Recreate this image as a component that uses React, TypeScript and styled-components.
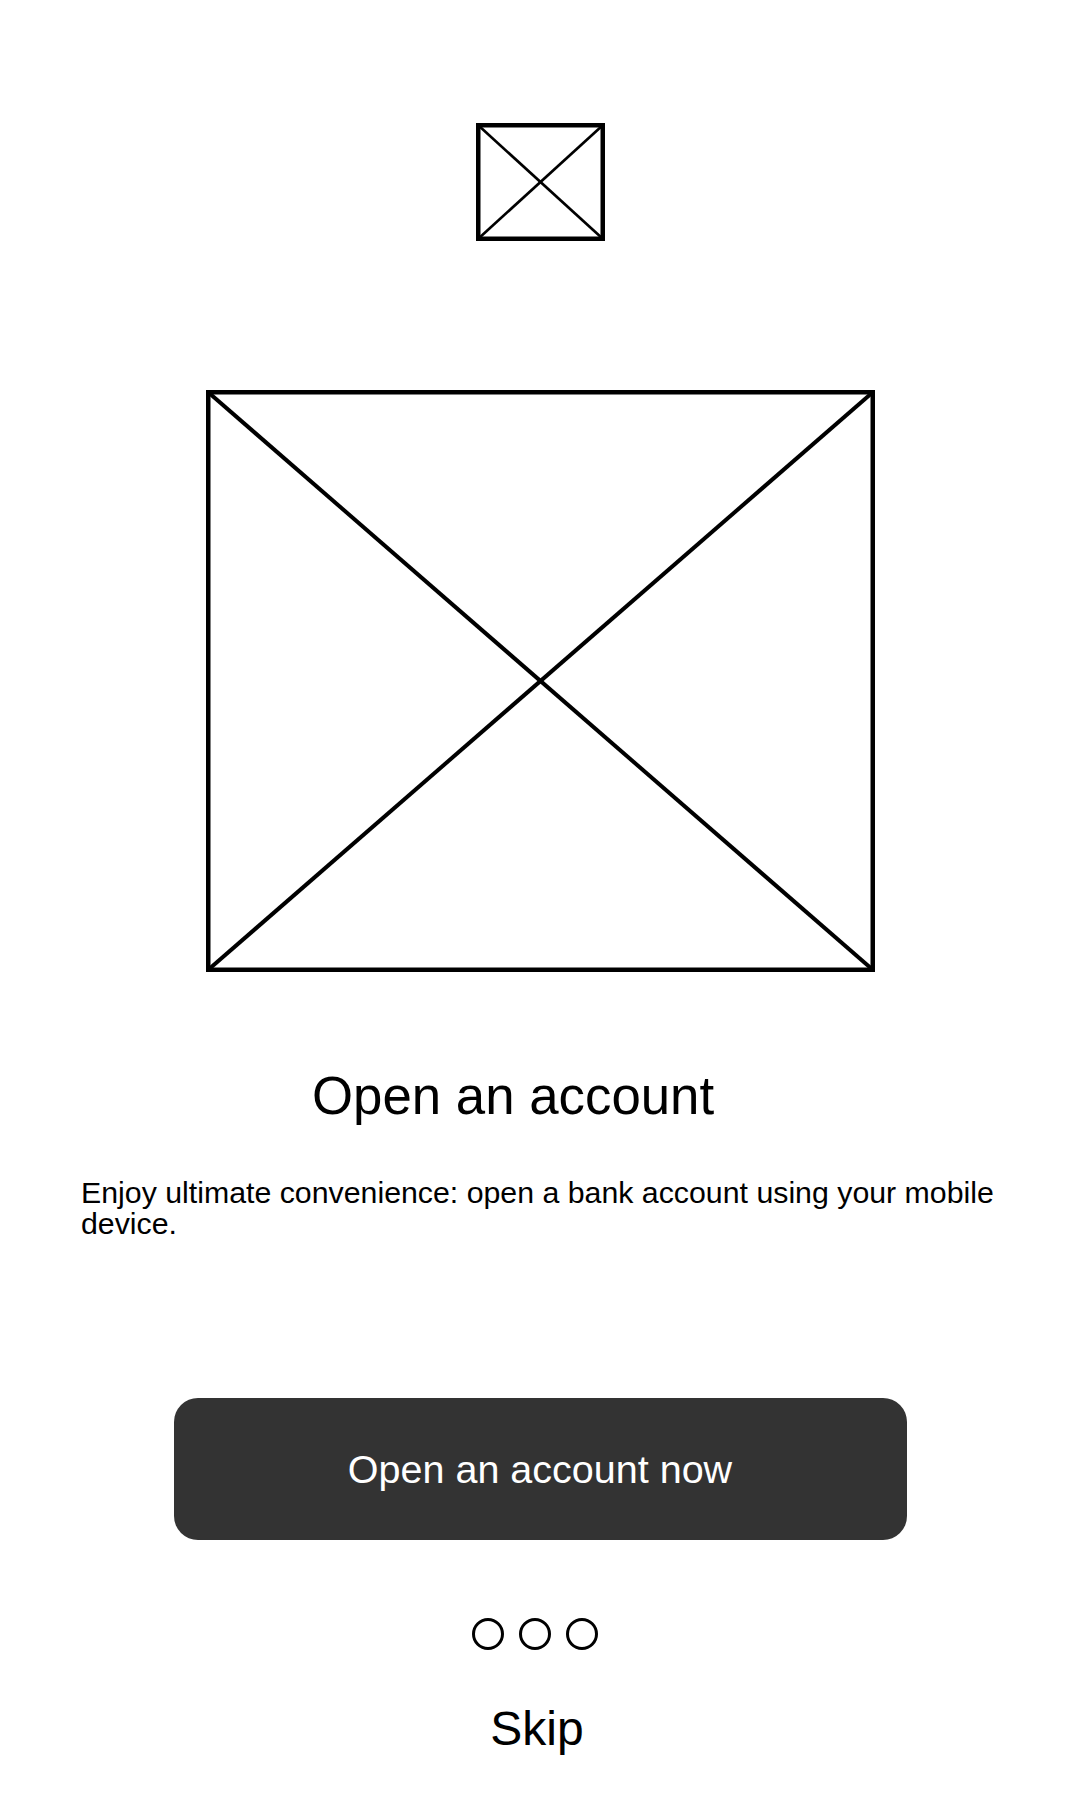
import React from "react";
import styled, { createGlobalStyle } from "styled-components";

const GlobalStyle = createGlobalStyle`
  html, body {
    margin: 0;
    padding: 0;
    background: #ffffff;
  }
  body {
    font-family: "Liberation Sans", Arial, sans-serif;
    color: #000000;
  }
`;

const Page = styled.div`
  width: 1080px;
  min-height: 1800px;
  display: flex;
  flex-direction: column;
  align-items: center;
  box-sizing: border-box;
  padding-top: 123px;
  background: #ffffff;
`;

const Placeholder = styled.svg<{ $mt?: number }>`
  display: block;
  flex: none;
  margin-top: ${(p) => p.$mt ?? 0}px;
`;

const Title = styled.h1`
  align-self: flex-start;
  margin: 98px 0 0 312px;
  font-size: 52.8px;
  line-height: 52px;
  font-weight: 400;
  white-space: nowrap;
`;

const Body = styled.p`
  align-self: stretch;
  margin: 55px 81px 0 81px;
  font-size: 30.3px;
  line-height: 31px;
  font-weight: 400;
`;

const PrimaryButton = styled.button`
  margin-top: 159px;
  width: 733px;
  height: 142px;
  border: none;
  border-radius: 24px;
  background: #333333;
  color: #ffffff;
  font-family: "Liberation Sans", Arial, sans-serif;
  font-size: 39.5px;
  display: flex;
  align-items: center;
  justify-content: center;
  cursor: pointer;
`;

const Dots = styled.div`
  margin-top: 78px;
  display: flex;
  gap: 15px;
  padding-right: 10px;
`;

const Dot = styled.span`
  display: block;
  width: 32px;
  height: 32px;
  box-sizing: border-box;
  border: 3px solid #000000;
  border-radius: 50%;
  background: #ffffff;
`;

const Skip = styled.a`
  margin-top: 55px;
  padding-right: 6px;
  font-size: 48px;
  line-height: 48px;
  color: #000000;
  text-decoration: none;
  cursor: pointer;
`;

function ImageBox({ w, h, frame, diag, mt }: { w: number; h: number; frame: number; diag: number; mt?: number }) {
  const o = frame / 2;
  return (
    <Placeholder $mt={mt} width={w} height={h} viewBox={`0 0 ${w} ${h}`}>
      <line x1={o} y1={o} x2={w - o} y2={h - o} stroke="#000" strokeWidth={diag} />
      <line x1={w - o} y1={o} x2={o} y2={h - o} stroke="#000" strokeWidth={diag} />
      <rect x={o} y={o} width={w - frame} height={h - frame} fill="none" stroke="#000" strokeWidth={frame} />
    </Placeholder>
  );
}

export default function App() {
  return (
    <>
      <GlobalStyle />
      <Page>
        <ImageBox w={129} h={118} frame={4.5} diag={2.6} />
        <ImageBox w={669} h={582} frame={4.5} diag={4} mt={149} />
        <Title>Open an account</Title>
        <Body>Enjoy ultimate convenience: open a bank account using your mobile device.</Body>
        <PrimaryButton>Open an account now</PrimaryButton>
        <Dots>
          <Dot />
          <Dot />
          <Dot />
        </Dots>
        <Skip>Skip</Skip>
      </Page>
    </>
  );
}
